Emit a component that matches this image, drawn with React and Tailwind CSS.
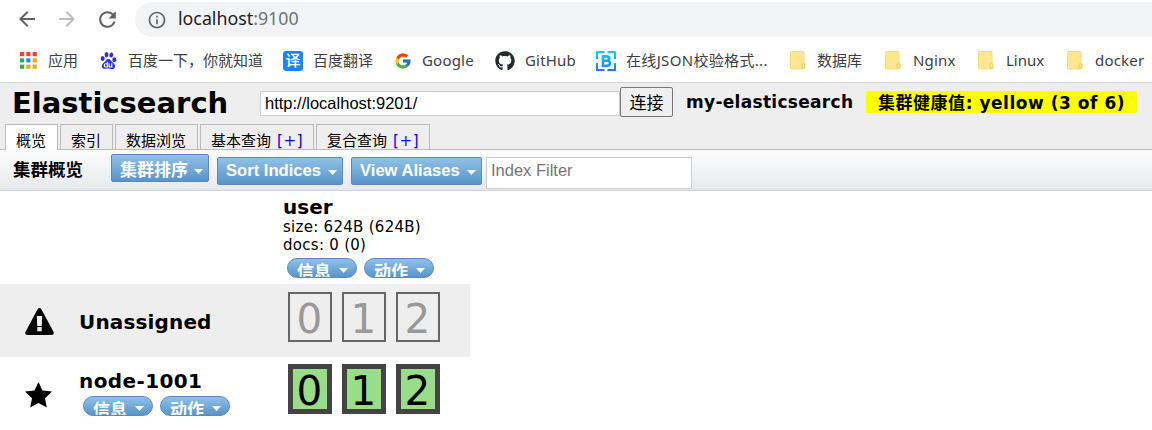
import React from "react";
import { MdArrowBack, MdArrowForward, MdRefresh, MdInfoOutline } from "react-icons/md";
import { FcGoogle } from "react-icons/fc";
import { FaGithub } from "react-icons/fa";
import { SiBaidu } from "react-icons/si";

const appColors = ["#ea4335", "#ea4335", "#ea4335", "#34a853", "#1a8cff", "#fbaa05", "#34a853", "#fbaa05", "#fbaa05"];

function AppsIcon() {
  return (
    <svg width="17" height="17" viewBox="0 0 17 17">
      {appColors.map((c, i) => (
        <rect key={i} x={(i % 3) * 6.3} y={Math.floor(i / 3) * 6.3} width="4.2" height="4.2" fill={c} />
      ))}
    </svg>
  );
}

function JsonIcon() {
  return (
    <svg width="20" height="20" viewBox="0 0 20 20">
      <defs>
        <linearGradient id="json" x1="0" y1="0" x2="0" y2="20" gradientUnits="userSpaceOnUse">
          <stop offset="0" stopColor="#12d2fb" />
          <stop offset="1" stopColor="#147cff" />
        </linearGradient>
      </defs>
      <g fill="none" stroke="url(#json)">
        <path strokeWidth="2" d="M8.500 1H1V8M11.500 1H19V8M1 12v7h7.500M19 12v7h-7.500" />
        <path strokeWidth="2.600" strokeLinejoin="round" d="M7 5.400h3.500q2.800.2 2.800 2.200t-2.800 2.200H7M7 9.800h4q3 .2 3 2.500t-3 2.400H7zM7 4v12" />
      </g>
    </svg>
  );
}

function FolderIcon() {
  return (
    <svg width="16" height="19" viewBox="0 0 16 19">
      <rect x=".5" y=".5" width="13.500" height="17.500" rx="1" fill="#ffe68f" stroke="#f9dc72" />
      <path d="M1 .5h12.500" stroke="#f8d95f" />
      <path d="M11.500 18v-4.500q0-1.800 2-1.800t2 1.800v3q0 1.500-1.500 1.500z" fill="#f5d65c" />
      <path d="M13.500 13.500v2.500" stroke="#ffeeb0" />
    </svg>
  );
}

function Bookmark({ icon, label, className, text }) {
  return (
    <div className={"flex shrink-0 items-center " + className}>
      {icon}
      <span className={"whitespace-nowrap " + text}>{label}</span>
    </div>
  );
}

function Caret() {
  return (
    <svg width="9" height="5" viewBox="0 0 9 5" className="block shrink-0">
      <path d="M0 0h9L4.500 5z" fill="#fff" />
    </svg>
  );
}

function MenuButton({ label, className }) {
  return (
    <button
      className={
        "flex h-7 shrink-0 items-center justify-between rounded-[2px] border border-[#5c87c5] bg-gradient-to-b from-[#90c1e8] to-[#5795c7] pl-2 pr-[5px] font-['Liberation_Sans','Noto_Sans_CJK_SC',sans-serif] font-bold leading-none text-white " +
        className
      }
    >
      <span className="whitespace-nowrap">{label}</span>
      <span className="pt-[2px]"><Caret /></span>
    </button>
  );
}

function Pill({ label }) {
  return (
    <button className="flex h-5 w-[70px] shrink-0 items-start justify-between overflow-hidden rounded-[10px] border border-[#5c87c5] bg-gradient-to-b from-[#90c1e8] to-[#5795c7] pl-[9px] pr-[8px] font-['Liberation_Sans','Noto_Sans_CJK_SC',sans-serif] text-[17px] font-bold leading-none text-white">
      <span className="whitespace-nowrap pt-[5px]">{label}</span>
      <span className="pt-[9px]"><Caret /></span>
    </button>
  );
}

function Shards({ kind }) {
  return (
    <div className="flex gap-[10px]">
      {[0, 1, 2].map((n) => (
        <div
          key={n}
          className={
            "flex h-[50px] w-11 items-center justify-center pr-px pt-[5px] text-[40.500px] leading-none " +
            (kind === "open" ? "border-2 border-[#666] text-[#999]" : "border-[5px] border-[#444] bg-[#99dd88] text-black")
          }
        >
          {n}
        </div>
      ))}
    </div>
  );
}

function Tab({ label, more, className }) {
  return (
    <div className={"flex items-start whitespace-nowrap border border-b-0 border-[#bbb] pl-[10px] pt-[6px] text-[15px] leading-[20px] " + className}>
      <span>{label}</span>
      {more && <span className="pl-[6px] tracking-[0.6px] text-[#0000ff]">[+]</span>}
    </div>
  );
}

export default function App() {
  return (
    <div className="h-[430px] w-[1152px] overflow-hidden bg-white font-['DejaVu_Sans','Noto_Sans_CJK_SC',sans-serif] text-black">
      <div className="flex h-[39px] items-start pt-[2px]">
        <div className="flex h-[35px] w-[135px] shrink-0 items-center pl-[15px] text-[#5f6368]">
          <MdArrowBack size={24} className="-mt-px" />
          <MdArrowForward size={24} className="-mt-px ml-[16px] text-[#bbbdbf]" />
          <MdRefresh size={25} className="-mt-px ml-[16px]" />
        </div>
        <div className="flex h-[35px] flex-1 items-center rounded-l-full bg-[#f1f3f4] pl-[12px]">
          <MdInfoOutline size={20} className="text-[#5f6368]" />
          <span className="-mt-px ml-[11px] font-['Noto_Sans',sans-serif] text-[17.800px] leading-none text-[#202124]">
            localhost<span className="text-[#6f7377]">:9100</span>
          </span>
        </div>
      </div>
      <div className="flex h-11 items-center border-b border-[#d5d5d5] pl-5 font-['Noto_Sans','Noto_Sans_CJK_SC',sans-serif] text-[15px] leading-none text-[#3c4043]">
        <Bookmark icon={<AppsIcon />} label="应用" className="w-[80px]" text="ml-[11px]" />
        <Bookmark icon={<SiBaidu size={17} color="#2932e1" />} label="百度一下，你就知道" className="w-[183px]" text="ml-[11px]" />
        <Bookmark
          icon={<span className="flex size-5 items-center justify-center rounded-[3px] bg-[#1687fb] text-[15px] font-medium text-white">译</span>}
          label="百度翻译"
          className="w-[111px]"
          text="ml-[10px]"
        />
        <Bookmark icon={<FcGoogle size={18} />} label="Google" className="w-[101px]" text="ml-[10px] tracking-[0.2px]" />
        <Bookmark icon={<FaGithub size={20} color="#24292e" />} label="GitHub" className="w-[101px]" text="ml-[10px] tracking-[0.2px]" />
        <Bookmark icon={<JsonIcon />} label="在线JSON校验格式..." className="w-[194px]" text="ml-[10px] tracking-[0.33px]" />
        <Bookmark icon={<FolderIcon />} label="数据库" className="w-[95px]" text="ml-[11px]" />
        <Bookmark icon={<FolderIcon />} label="Nginx" className="w-[93px]" text="ml-[12px] tracking-[0.2px]" />
        <Bookmark icon={<FolderIcon />} label="Linux" className="w-[89px]" text="ml-[12px]" />
        <Bookmark icon={<FolderIcon />} label="docker" className="w-[85px]" text="ml-[12px] tracking-[0.2px]" />
      </div>

      <div className="flex h-[67px] flex-col justify-between border-b border-[#bbb] bg-[#eee]">
        <div className="flex h-[38px] items-start">
          <h1 className="w-[260px] shrink-0 whitespace-nowrap pl-[12px] pt-[6px] text-[29px] font-bold leading-none">Elasticsearch</h1>
          <div className="mt-2 flex h-[25px] w-[360px] shrink-0 items-center border border-[#ccc] bg-white pl-1 font-['Liberation_Sans',sans-serif] text-[16.500px] leading-none">
            http://localhost:9201/
          </div>
          <button className="mt-1 flex h-[30px] w-[53px] shrink-0 items-center justify-center rounded-[2px] border border-[#767676] bg-[#efefef] pt-[3px] text-[17px] leading-none">连接</button>
          <div className="ml-[13px] mt-2 w-[180px] shrink-0 whitespace-nowrap text-[17px] font-bold leading-[23px] tracking-[0.3px]">my-elasticsearch</div>
          <div className="mt-2 h-[22px] w-[271px] shrink-0 whitespace-nowrap bg-[#ff0] pl-3 text-[17px] font-bold leading-[24px] tracking-[0.53px]">集群健康值: yellow (3 of 6)</div>
        </div>
        <div className="-mb-px flex h-[26px] items-start pl-[5px]">
          <Tab label="概览" className="h-[26px] w-[53px] bg-white" />
          <Tab label="索引" className="ml-[2px] h-[25px] w-[53px]" />
          <Tab label="数据浏览" className="ml-[2px] h-[25px] w-[83px]" />
          <Tab label="基本查询" more className="ml-[2px] h-[25px] w-[114px]" />
          <Tab label="复合查询" more className="ml-[2px] h-[25px] w-[114px]" />
        </div>
      </div>

      <div className="flex h-[41px] items-start border-b border-[#ced1d4] bg-gradient-to-b from-[#fcfdfd] to-[#e6e9eb]">
        <h2 className="w-[111px] shrink-0 pl-[13px] pt-[12px] text-[17.500px] font-bold leading-none">集群概览</h2>
        <MenuButton label="集群排序" className="mt-1 w-[98px] pt-[4px] text-[17px]" />
        <MenuButton label="Sort Indices" className="ml-2 mt-[7px] w-[126px] text-[16.600px]" />
        <MenuButton label="View Aliases" className="ml-2 mt-[7px] w-[131px] text-[16.600px]" />
        <div className="ml-1 mt-[7px] h-8 w-[206px] border border-[#ccc] bg-white pl-1 pt-[3px] font-['Liberation_Sans',sans-serif] text-[16.500px] leading-[18px] text-[#757575]">
          Index Filter
        </div>
      </div>

      <div className="h-[93px] pl-[283px] pt-[6px]">
        <div className="text-[20px] font-bold leading-[21px]">user</div>
        <div className="text-[15px] leading-[19px] tracking-[0.28px]">size: 624B (624B)</div>
        <div className="text-[15px] leading-[17px] tracking-[0.28px]">docs: 0 (0)</div>
        <div className="ml-[4px] mt-1 flex gap-[7px]">
          <Pill label="信息" />
          <Pill label="动作" />
        </div>
      </div>
      <div className="flex h-[73px] w-[470px] items-start bg-[#eee]">
        <div className="w-[79px] pl-[25px] pt-[24px]">
          <svg width="29" height="27" viewBox="0 0 29 27">
            <path fillRule="evenodd" d="M12.600 1.200Q14.500-1.200 16.400 1.200L28.600 24Q29.500 27 26.500 27H2.500Q-.5 27 .4 24zM11.800 8l.4 10h4.600l.4-10zM12.300 19v4.200h4.400v-4.200z" />
          </svg>
        </div>
        <div className="w-[209px] pt-[28px] text-[20px] font-bold leading-[21px] tracking-[0.15px]">Unassigned</div>
        <div className="pt-2"><Shards kind="open" /></div>
      </div>
      <div className="flex h-[73px] w-[470px] items-start">
        <div className="w-[79px] pl-[25px] pt-[25px]">
          <svg width="27" height="26" viewBox="0 0 27 26">
            <path d="M13.500 0l4 8.500 9.500 1-7 6.700 1.800 9.300-8.300-4.500-8.300 4.500L7 16.200 0 9.500l9.500-1z" />
          </svg>
        </div>
        <div className="w-[209px] pt-[14px]">
          <div className="text-[20px] font-bold leading-[21px] tracking-[0.4px]">node-1001</div>
          <div className="ml-[4px] mt-[4px] flex gap-[7px]">
            <Pill label="信息" />
            <Pill label="动作" />
          </div>
        </div>
        <div className="pt-[7px]"><Shards kind="started" /></div>
      </div>
    </div>
  );
}
